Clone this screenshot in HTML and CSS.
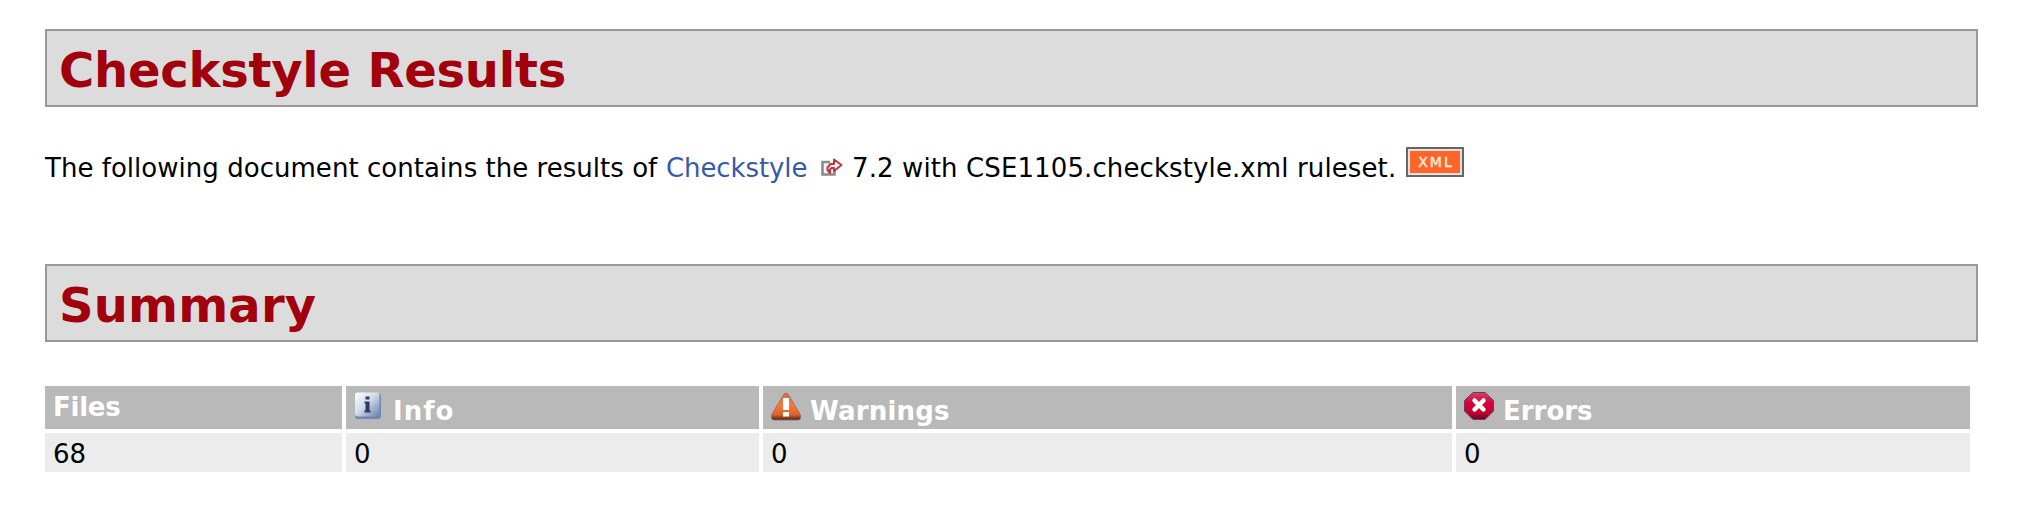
FILE: index.html
```html
<!DOCTYPE html>
<html lang="en">
<head>
<meta charset="utf-8">
<title>Checkstyle Results</title>
<link rel="stylesheet" href="styles.css">
</head>
<body>
<main class="page">
  <h2 class="heading heading-results">Checkstyle Results</h2>
  <p class="intro"><span class="lead">The following document contains the results of</span> <a class="link" href="#">Checkstyle</a><svg class="external" width="22" height="19" viewBox="0 0 22 19"><path d="M9 4H1.500v12.500h12V13" fill="#f4f4f4" stroke="#8c8c8c" stroke-width="2.600"/><path d="M9 15L6.500 12V9.500L9.500 6H13V1.500L20.500 7 13 13V10H10.500L9 11.500Z" fill="#fff4f4" stroke="#bd3545" stroke-width="2" stroke-linejoin="round"/></svg><span class="ruleset">7.2 with CSE1105.checkstyle.xml ruleset.</span><span class="badge">XML</span></p>
  <h2 class="heading heading-summary">Summary</h2>
  <div class="table">
    <div class="cell head files">Files</div>
    <div class="cell head head-icon"><svg class="icon" width="30" height="30" viewBox="0 0 30 30"><defs><linearGradient id="blue" x1="0" y1="0" x2="1" y2="1"><stop offset="0" stop-color="#fff"/><stop offset=".45" stop-color="#d5ddea"/><stop offset="1" stop-color="#6480b0"/></linearGradient></defs><rect x="1" y="1.500" width="26" height="25.500" rx="3" fill="#7188b0"/><rect x="1" y="0.500" width="24.500" height="24" rx="2.500" fill="url(#blue)"/><path d="M11.500 4.500h4v3h-4zM10.500 9.500h5v9h1v2h-6v-2h1v-7h-1z" fill="#2a3c68"/></svg><span class="info">Info</span></div>
    <div class="cell head head-icon"><svg class="icon" width="30" height="30" viewBox="0 0 30 30"><defs><linearGradient id="orange" x1="0" y1="0" x2="0" y2="1"><stop offset="0" stop-color="#d56d43"/><stop offset=".45" stop-color="#fa7834"/><stop offset=".8" stop-color="#e1622c"/><stop offset="1" stop-color="#492419"/></linearGradient></defs><path d="M13 2Q15 0 17 2L29 22Q31 28 27 28H3Q-1 28 1 22Z" fill="url(#orange)" stroke="#936b69" stroke-width=".8"/><path d="M12 6h6v12h-6zM12 20h6v4.500h-6z" fill="#fff"/></svg><span class="warnings">Warnings</span></div>
    <div class="cell head head-icon"><svg class="icon" width="30" height="30" viewBox="0 0 30 30"><defs><linearGradient id="red" x1="0" y1="0" x2="0" y2="1"><stop offset="0" stop-color="#c94867"/><stop offset=".35" stop-color="#d8043d"/><stop offset=".75" stop-color="#c2002f"/><stop offset="1" stop-color="#650a30"/></linearGradient></defs><path d="M9 .5H21L29.500 8.500V19L21 27.500H9L.5 19V8.500Z" fill="url(#red)" stroke="#70375b"/><path d="m10.500 8.500 9 9M19.500 8.500l-9 9" fill="none" stroke="#fff" stroke-width="4.500" stroke-linecap="round"/></svg><span class="errors">Errors</span></div>
    <div class="cell">68</div>
    <div class="cell">0</div>
    <div class="cell">0</div>
    <div class="cell">0</div>
  </div>
</main>
</body>
</html>
```
FILE: styles.css
```css
body {
  margin: 0;
  background: #fff;
  color: #000;
  font: 26px/30px Verdana, "DejaVu Sans", sans-serif;
}
.page {
  padding: 29px 40px 0 45px;
}
.heading {
  box-sizing: border-box;
  height: 78px;
  margin: 0;
  padding: 10px 12px;
  border: 2px solid #999;
  background: #dcdcdc;
  color: #a1000d;
  font-size: 48px;
  line-height: 58px;
  white-space: nowrap;
}
.heading-results {
  letter-spacing: -0.22px;
}
.heading-summary {
  letter-spacing: 0.15px;
}
.intro {
  display: flex;
  height: 40px;
  margin: 40px 0 77px;
  line-height: 42px;
  white-space: nowrap;
}
.lead {
  width: 621px;
  letter-spacing: 0.03px;
}
.link {
  width: 155px;
  color: #355ba5;
  letter-spacing: -0.1px;
  text-decoration: none;
}
.external {
  margin-top: 11px;
}
.ruleset {
  width: 554px;
  margin-left: 9px;
  letter-spacing: 0.11px;
}
.badge {
  box-sizing: border-box;
  width: 58px;
  height: 30px;
  border: 2px solid #666;
  background: #ff6429;
  box-shadow: inset 0 0 0 2px #e8e0dc;
  color: #fff0df;
  font-size: 14px;
  line-height: 27px;
  letter-spacing: 2px;
  text-indent: 2px;
  text-align: center;
  -webkit-text-stroke: 0.4px #fff0df;
}
.table {
  display: grid;
  grid-template-columns: 297px 413px 689px 514px;
  grid-template-rows: 43px 39px;
  gap: 4px;
  margin-top: 44px;
}
.cell {
  box-sizing: border-box;
  padding: 6px 8px 0;
  background: #ececec;
}
.head {
  background: #b9b9b9;
  color: #fff;
  font-weight: bold;
}
.files {
  letter-spacing: -0.25px;
}
.head-icon {
  display: flex;
  gap: 9px;
}
.head-icon span {
  margin-top: 4px;
}
.info {
  letter-spacing: 1px;
}
.warnings {
  letter-spacing: 0.2px;
}
```
